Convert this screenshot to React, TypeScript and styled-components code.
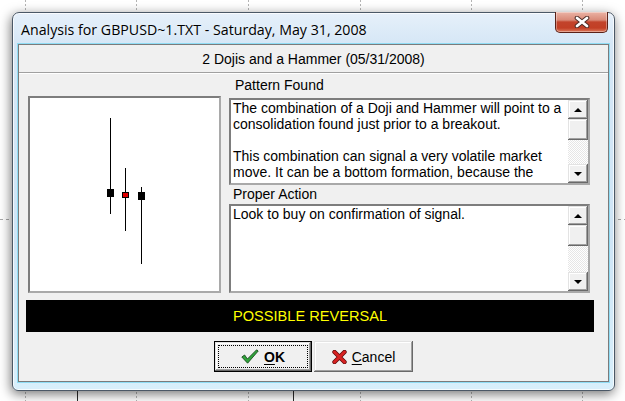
import React from 'react';
import styled, { createGlobalStyle, css } from 'styled-components';

const GlobalStyle = createGlobalStyle`
  html, body {
    margin: 0;
    padding: 0;
    background: #ffffff;
  }
  body {
    font-family: "Liberation Sans", Arial, sans-serif;
  }
`;

// chart paper behind the dialog: dashed grid ticks and two axis lines
const Desktop = styled.div`
  width: 625px;
  height: 401px;
  overflow: hidden;
  box-sizing: border-box;
  padding: 12px 0 0 12px;
  background:
    linear-gradient(#2a2a2a, #2a2a2a) 77px 390px / 1px 11px no-repeat,
    linear-gradient(#2a2a2a, #2a2a2a) 293px 390px / 1px 11px no-repeat,
    linear-gradient(#b4b4b4 50%, transparent 0) 25px 0 / 1px 4px repeat-y,
    linear-gradient(#b4b4b4 50%, transparent 0) 136px 0 / 1px 4px repeat-y,
    linear-gradient(#b4b4b4 50%, transparent 0) 248px 0 / 1px 4px repeat-y,
    linear-gradient(#b4b4b4 50%, transparent 0) 360px 0 / 1px 4px repeat-y,
    linear-gradient(#b4b4b4 50%, transparent 0) 471px 0 / 1px 4px repeat-y,
    linear-gradient(#b4b4b4 50%, transparent 0) 582px 0 / 1px 4px repeat-y,
    linear-gradient(to right, #a8a8a8 50%, transparent 0) 0 219px / 6px 1px repeat-x,
    #ffffff;
`;

const Window = styled.div`
  width: 603px;
  height: 379px;
  box-sizing: border-box;
  border: 1px solid #4b5866;
  border-radius: 7px 7px 6px 6px;
  background: linear-gradient(to bottom, #e6f0fa 0, #d6e7f6 30px, #cfe5f6 60%, #d8effb 100%);
  box-shadow: -1px 3px 12px rgba(0, 0, 0, 0.55), inset 0 0 0 1px rgba(255, 255, 255, 0.75);
  padding: 0 5px 8px 5px;
  display: flex;
  flex-direction: column;
`;

const TitleBar = styled.div`
  height: 31px;
  display: flex;
  align-items: center;
`;

const Title = styled.div`
  padding-left: 3px;
  padding-top: 1px;
  font-family: "Open Sans", "Noto Sans", sans-serif;
  font-size: 14.2px;
  color: #000;
  text-shadow: 0 0 6px rgba(255, 255, 255, 0.9);
  white-space: nowrap;
`;

const CloseButton = styled.div`
  margin-left: auto;
  margin-right: 1px;
  align-self: flex-start;
  margin-top: -1px;
  width: 53px;
  height: 21px;
  box-sizing: border-box;
  border: 1px solid #5a2118;
  border-top: none;
  border-radius: 0 0 5px 5px;
  background: linear-gradient(to bottom, #ebb3a5 0, #d98a78 40%, #c2432b 50%, #c23f25 80%, #dc7b5e 100%);
  box-shadow: inset 0 0 0 1px rgba(255, 255, 255, 0.35);
  display: flex;
  align-items: center;
  justify-content: center;
`;

const Client = styled.div`
  flex: 1;
  border: 1px solid #7b7b7b;
  background: #f0f0f0;
  box-shadow: 0 0 0 1px #8fdcf4;
  display: flex;
  flex-direction: column;
`;

const Caption = styled.div`
  height: 28px;
  box-sizing: border-box;
  border-bottom: 1px solid #a0a0a0;
  box-shadow: 0 1px 0 #ffffff;
  display: flex;
  align-items: center;
  justify-content: center;
  font-size: 14px;
  color: #000;
`;

const Body = styled.div`
  display: grid;
  grid-template-columns: 193px 361px;
  column-gap: 8px;
  padding: 4px 0 0 9px;
`;

const ChartBox = styled.div`
  margin-top: 19px;
  height: 197px;
  box-sizing: border-box;
  border: 2px solid;
  border-color: #7d7d7d #a9a9a9 #a9a9a9 #7d7d7d;
  background: #ffffff;
  display: flex;
`;

const Column = styled.div`
  display: flex;
  flex-direction: column;
`;

const Label = styled.div<{ $indent: number; $gap: number }>`
  height: 16px;
  line-height: 16px;
  margin-top: ${p => p.$gap}px;
  padding-left: ${p => p.$indent}px;
  font-size: 14px;
  color: #000;
`;

const Memo = styled.div<{ $height: number; $gap: number }>`
  height: ${p => p.$height}px;
  margin-top: ${p => p.$gap}px;
  box-sizing: border-box;
  border: 2px solid;
  border-color: #7d7d7d #a9a9a9 #a9a9a9 #7d7d7d;
  background: #ffffff;
  display: grid;
  grid-template-columns: 1fr 20px;
`;

const MemoText = styled.div`
  padding: 0 2px;
  overflow: hidden;
  font-size: 14px;
  line-height: 16px;
  white-space: nowrap;
  color: #000;
`;

const ScrollBar = styled.div`
  display: flex;
  flex-direction: column;
`;

const bevel = css`
  box-sizing: border-box;
  background: #f0f0f0;
  box-shadow:
    inset -1px -1px #696969,
    inset 1px 1px #e3e3e3,
    inset -2px -2px #a0a0a0,
    inset 2px 2px #ffffff;
`;

const ScrollButton = styled.div`
  ${bevel};
  height: 19px;
  display: flex;
  align-items: center;
  justify-content: center;
`;

const Thumb = styled.div`
  ${bevel};
  height: 21px;
`;

const Track = styled.div`
  flex: 1;
  background: repeating-conic-gradient(#ffffff 0 25%, #e6e6e6 0 50%) 0 0 / 2px 2px;
`;

const Arrow = styled.span<{ $down?: boolean }>`
  width: 0;
  height: 0;
  border-left: 4px solid transparent;
  border-right: 4px solid transparent;
  ${p => (p.$down ? 'border-top: 4px solid #000;' : 'border-bottom: 4px solid #000;')}
`;

const Verdict = styled.div`
  margin: 7px 0 0 7px;
  width: 568px;
  height: 32px;
  background: #000;
  color: #ffff00;
  font-size: 14.6px;
  display: flex;
  align-items: center;
  justify-content: center;
`;

const Buttons = styled.div`
  margin-top: 9px;
  display: flex;
  justify-content: center;
  gap: 2px;
`;

const Button = styled.div<{ $width: number; $default?: boolean }>`
  ${bevel};
  width: ${p => p.$width}px;
  height: 31px;
  display: flex;
  align-items: center;
  justify-content: center;
  gap: 5px;
  font-size: 14px;
  color: #000;
  ${p =>
    p.$default &&
    css`
      border: 1px solid #000;
      outline: 1px dotted #000;
      outline-offset: -5px;
    `}

  u {
    text-underline-offset: 2px;
  }
`;

const ButtonLabel = styled.span<{ $bold?: boolean }>`
  font-weight: ${p => (p.$bold ? 700 : 400)};
`;

const CloseGlyph = () => (
  <svg width="16" height="12" viewBox="0 0 16 12">
    <path d="M3 2 L13 10 M13 2 L3 10" stroke="#4a2a24" strokeWidth="4.6" strokeLinecap="round" />
    <path d="M3 2 L13 10 M13 2 L3 10" stroke="#ffffff" strokeWidth="2.8" strokeLinecap="round" />
  </svg>
);

const CheckIcon = () => (
  <svg width="18" height="15" viewBox="0 0 18 15">
    <path
      d="M0.8 8 L3.6 6 L6.4 10 L15.6 0.8 L17.2 2 L6.6 14.2 Z"
      fill="#2fa33a"
      stroke="#1b4d1f"
      strokeWidth="0.9"
      strokeLinejoin="round"
    />
  </svg>
);

const CrossIcon = () => (
  <svg width="15" height="14" viewBox="0 0 15 14">
    <path d="M2.5 2 L12.5 12 M12.5 2 L2.5 12" stroke="#5e0b0b" strokeWidth="4.4" strokeLinecap="round" />
    <path d="M2.5 2 L12.5 12 M12.5 2 L2.5 12" stroke="#d72222" strokeWidth="2.9" strokeLinecap="round" />
  </svg>
);

// three candles: doji, small red doji, hammer
const CandleChart = () => (
  <svg width="189" height="193" viewBox="0 0 189 193">
    <line x1="80.5" y1="20" x2="80.5" y2="116" stroke="#000" />
    <rect x="77" y="91" width="7" height="8" fill="#000" />
    <line x1="95.5" y1="70" x2="95.5" y2="133" stroke="#000" />
    <rect x="92.5" y="94.5" width="6" height="5" fill="#e00000" stroke="#000" />
    <line x1="111.5" y1="89" x2="111.5" y2="166" stroke="#000" />
    <rect x="108" y="94" width="7" height="8" fill="#000" />
  </svg>
);

const ScrollCtl = () => (
  <ScrollBar>
    <ScrollButton>
      <Arrow />
    </ScrollButton>
    <Thumb />
    <Track />
    <ScrollButton>
      <Arrow $down />
    </ScrollButton>
  </ScrollBar>
);

export default function App() {
  return (
    <>
      <GlobalStyle />
      <Desktop>
        <Window>
          <TitleBar>
            <Title>Analysis for GBPUSD~1.TXT - Saturday, May 31, 2008</Title>
            <CloseButton>
              <CloseGlyph />
            </CloseButton>
          </TitleBar>
          <Client>
            <Caption>2 Dojis and a Hammer (05/31/2008)</Caption>
            <Body>
              <ChartBox>
                <CandleChart />
              </ChartBox>
              <Column>
                <Label $indent={6} $gap={0}>Pattern Found</Label>
                <Memo $height={87} $gap={5}>
                  <MemoText>
                    The combination of a Doji and Hammer will point to a<br />
                    consolidation found just prior to a breakout.<br />
                    <br />
                    This combination can signal a very volatile market<br />
                    move. It can be a bottom formation, because the
                  </MemoText>
                  <ScrollCtl />
                </Memo>
                <Label $indent={4} $gap={1}>Proper Action</Label>
                <Memo $height={89} $gap={2}>
                  <MemoText>Look to buy on confirmation of signal.</MemoText>
                  <ScrollCtl />
                </Memo>
              </Column>
            </Body>
            <Verdict>POSSIBLE REVERSAL</Verdict>
            <Buttons>
              <Button $width={98} $default>
                <CheckIcon />
                <ButtonLabel $bold>
                  <u>O</u>K
                </ButtonLabel>
              </Button>
              <Button $width={99}>
                <CrossIcon />
                <ButtonLabel>
                  <u>C</u>ancel
                </ButtonLabel>
              </Button>
            </Buttons>
          </Client>
        </Window>
      </Desktop>
    </>
  );
}
